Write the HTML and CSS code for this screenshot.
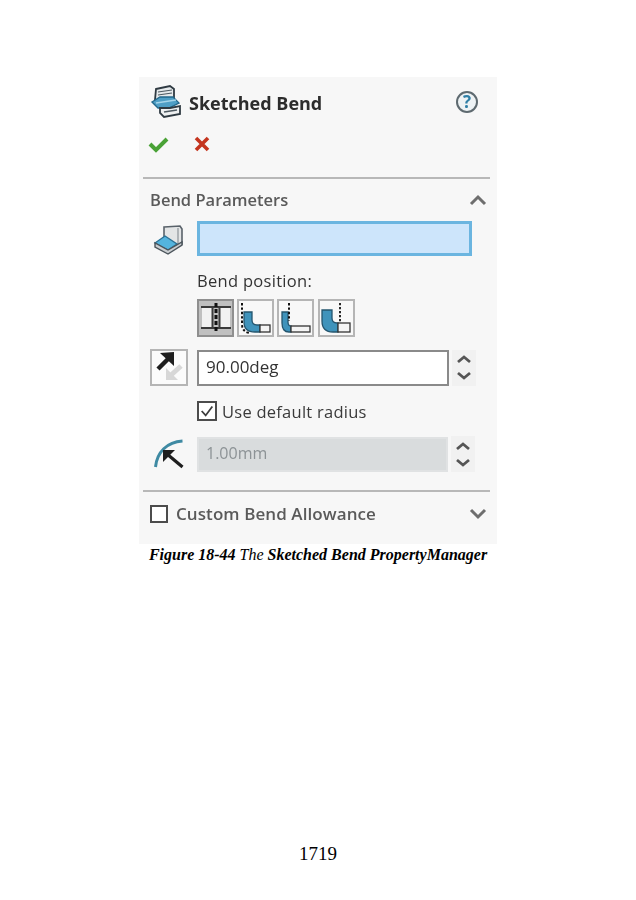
FILE: index.html
```html
<!DOCTYPE html>
<html lang="en">
<head>
  <meta charset="UTF-8" />
  <title>Sketched Bend</title>
  <link rel="stylesheet" href="styles.css">
</head>
<body>
  <div class="page">
    <div class="panel">
      <div class="title-row">
        <svg class="title-icon" width="32" height="34" viewBox="0 0 32 34">
          <path d="M5 4 L19 1 L23 4 L23 16 L7 18 L4 15 Z" fill="#e6eaec" stroke="#2f3a42" stroke-width="1.8"/>
          <path d="M7 7 L21 5 M7 10 L21 8" stroke="#4e5a62" stroke-width="1.1" fill="none"/>
          <path d="M1 17 L9 12 L22 12 L28 18 L18 23 L7 23 Z" fill="#4f9fc6" stroke="#22688c" stroke-width="1.3"/>
          <path d="M5 18 L25 15" stroke="#a6d5ea" stroke-width="1.5"/>
          <path d="M9 23 L9 28 L13 32 L29 29 L29 21 L19 23 Z" fill="#eef0f1" stroke="#2f3a42" stroke-width="1.8"/>
          <path d="M13 27 L26 25" stroke="#4e5a62" stroke-width="1.5"/>
        </svg>
        <span class="title">Sketched Bend</span>
        <svg class="help-icon" width="24" height="24" viewBox="0 0 24 24">
          <circle cx="12" cy="12" r="10" fill="#eef3f5" stroke="#5e6a70" stroke-width="2"/>
          <text x="12" y="18" text-anchor="middle" class="help-mark">?</text>
        </svg>
      </div>
      <div class="actions">
        <svg width="22" height="18" viewBox="0 0 22 18">
          <path d="M2 9 L8 15 L19 4" fill="none" stroke="#4aa236" stroke-width="4"/>
        </svg>
        <svg width="18" height="18" viewBox="0 0 18 18">
          <path d="M3 3 L15 15 M15 3 L3 15" fill="none" stroke="#c4351f" stroke-width="3.6"/>
        </svg>
      </div>
      <hr class="divider">
      <div class="section-head">
        <span class="section-title">Bend Parameters</span>
        <svg class="chevron" width="18" height="12" viewBox="0 0 18 12">
          <path d="M2 10 L9 3 L16 10" fill="none" stroke="#6e6e6e" stroke-width="3"/>
        </svg>
      </div>
      <div class="fields">
        <div class="row-icon">
          <svg width="32" height="32" viewBox="0 0 32 32">
            <path d="M11 4 L27 3 L29 6 L29 21 L24 22 L11 16 Z" fill="#e3e5e6" stroke="#59626a" stroke-width="1.6"/>
            <path d="M25 5 L25 21" stroke="#8b9298" stroke-width="1.2"/>
            <path d="M2 20 L12 13 L24 21 L15 27 Z" fill="#54b4de" stroke="#2c7296" stroke-width="1.4"/>
            <path d="M2 20 L2 24 L15 31 L29 22 L29 19 L15 27 Z" fill="#c9cdd0" stroke="#4b545b" stroke-width="1.4"/>
          </svg>
        </div>
        <div class="selection-box"></div>

        <div class="spacer"></div>
        <div class="position-group">
          <div class="field-label">Bend position:</div>
          <div class="position-buttons">
            <button class="pos-btn active">
              <svg width="32" height="32" viewBox="0 0 32 32">
                <path d="M2 6 H12 V25 H2 Z M20 6 H30 V25 H20 Z" fill="#f2f2f2"/>
                <path d="M1 5 L31 5 M1 26 L31 26" stroke="#3b3b3b" stroke-width="1.8"/>
                <path d="M12.5 5 L12.5 26 M19.5 5 L19.5 26" stroke="#3b3b3b" stroke-width="2"/>
                <path d="M16 1 L16 31" stroke="#111" stroke-width="3" stroke-dasharray="4 2"/>
              </svg>
            </button>
            <button class="pos-btn">
              <svg width="32" height="32" viewBox="0 0 32 32">
                <path d="M4 10 H12 V18 Q12 23 17 23 H20 V30 H15 Q4 30 4 20 Z" fill="#3f93bb" stroke="#24556e" stroke-width="1.3"/>
                <rect x="20" y="23" width="10" height="7" fill="#f4f4f4" stroke="#333" stroke-width="1.3"/>
                <path d="M2 1 L2 22 Q2 30 10 31" fill="none" stroke="#111" stroke-width="2" stroke-dasharray="2.4 2"/>
              </svg>
            </button>
            <button class="pos-btn">
              <svg width="32" height="32" viewBox="0 0 32 32">
                <path d="M2 10 H8 V20 Q8 24 11 24 V30 H9 Q2 30 2 21 Z" fill="#3f93bb" stroke="#24556e" stroke-width="1.3"/>
                <rect x="11" y="24" width="19" height="6" fill="#f4f4f4" stroke="#333" stroke-width="1.3"/>
                <path d="M9 1 L9 19" stroke="#111" stroke-width="2" stroke-dasharray="2.4 2"/>
              </svg>
            </button>
            <button class="pos-btn">
              <svg width="32" height="32" viewBox="0 0 32 32">
                <path d="M2 8 H12 V16 Q12 21 17 21 H18 V30 H13 Q2 30 2 19 Z" fill="#3f93bb" stroke="#24556e" stroke-width="1.3"/>
                <rect x="18" y="21" width="12" height="9" fill="#f4f4f4" stroke="#333" stroke-width="1.3"/>
                <path d="M20 1 L20 21" stroke="#111" stroke-width="1.8" stroke-dasharray="2.2 1.8"/>
              </svg>
            </button>
          </div>
        </div>

        <div class="row-icon">
          <div class="direction-btn">
            <svg width="34" height="33" viewBox="0 0 34 33">
              <path d="M29 15 L18 25" stroke="#d7d7d7" stroke-width="5"/>
              <path d="M14 29 L14 17 L26 29 Z" fill="#d7d7d7"/>
              <path d="M6 18 L17 7" stroke="#1e1e1e" stroke-width="4.4"/>
              <path d="M22 1 L8 2 L22 15 Z" fill="#1e1e1e"/>
            </svg>
          </div>
        </div>
        <div class="value-row">
          <div class="value-box">90.00deg</div>
          <div class="spinner">
            <svg width="16" height="11" viewBox="0 0 16 11"><path d="M2 8 L8 3 L14 8" fill="none" stroke="#555" stroke-width="2.8"/></svg>
            <svg width="16" height="11" viewBox="0 0 16 11"><path d="M2 3 L8 8 L14 3" fill="none" stroke="#555" stroke-width="2.8"/></svg>
          </div>
        </div>

        <div class="spacer"></div>
        <label class="check-row">
          <span class="checkbox">
            <svg width="18" height="18" viewBox="0 0 18 18"><path d="M3 9 L7.5 14 L15 4" fill="none" stroke="#3c3c3c" stroke-width="2"/></svg>
          </span>
          <span class="check-label">Use default radius</span>
        </label>

        <div class="row-icon">
          <svg width="34" height="34" viewBox="0 0 34 34">
            <path d="M3.5 30 C5 15 15 5 30.5 4" fill="none" stroke="#3f8aa3" stroke-width="3"/>
            <path d="M15 17 L30.5 30" stroke="#1e1e1e" stroke-width="3.2"/>
            <path d="M11 13 L23 13 L11 25 Z" fill="#1e1e1e"/>
          </svg>
        </div>
        <div class="value-row">
          <div class="value-box disabled">1.00mm</div>
          <div class="spinner">
            <svg width="16" height="11" viewBox="0 0 16 11"><path d="M2 8 L8 3 L14 8" fill="none" stroke="#555" stroke-width="2.8"/></svg>
            <svg width="16" height="11" viewBox="0 0 16 11"><path d="M2 3 L8 8 L14 3" fill="none" stroke="#555" stroke-width="2.8"/></svg>
          </div>
        </div>
      </div>
      <hr class="divider lower">
      <div class="section-head custom">
        <span class="checkbox plain"></span>
        <span class="section-title wide">Custom Bend Allowance</span>
        <svg class="chevron" width="18" height="12" viewBox="0 0 18 12">
          <path d="M2 2 L9 9 L16 2" fill="none" stroke="#6e6e6e" stroke-width="3"/>
        </svg>
      </div>
    </div>
    <p class="caption"><b>Figure 18-44</b> The <b>Sketched Bend PropertyManager</b></p>
    <div class="page-number">1719</div>
  </div>
</body>
</html>
```

FILE: styles.css
```css
body {
  margin: 0;
  background: #fff;
  font-family: "Open Sans", sans-serif;
}

.page {
  width: 636px;
  height: 900px;
  padding-top: 77px;
  box-sizing: border-box;
  display: flex;
  flex-direction: column;
  align-items: center;
}

.panel {
  width: 358px;
  height: 467px;
  box-sizing: border-box;
  padding: 8px 7px 0 4px;
  background: #f7f7f7;
  filter: blur(0.35px);
}

.title-row {
  display: flex;
  align-items: center;
  height: 34px;
  padding-left: 8px;
}

.title-icon {
  margin-right: 6px;
}

.title {
  font-size: 18px;
  font-weight: 700;
  color: #2c2c2c;
  flex: 1;
  padding-top: 1px;
}

.help-icon {
  margin-right: 11px;
}

.help-mark {
  font-family: "Open Sans", sans-serif;
  font-size: 17px;
  font-weight: 700;
  fill: #2f7fa6;
}

.actions {
  display: flex;
  align-items: center;
  gap: 23px;
  height: 24px;
  margin-top: 13px;
  padding-left: 5px;
}

.divider {
  height: 2px;
  border: 0;
  margin: 21px 0 0 0;
  background: #b8b8b8;
}

.divider.lower {
  margin-top: 18px;
}

.section-head {
  display: flex;
  align-items: center;
  height: 20px;
  margin-top: 11px;
  padding-left: 7px;
}

.section-title {
  flex: 1;
  font-size: 16.5px;
  font-weight: 600;
  color: #5a5a5a;
  line-height: 18px;
}

.section-title.wide {
  font-size: 17px;
  letter-spacing: 0.08px;
}

.chevron {
  margin-right: 3px;
}

.fields {
  display: grid;
  grid-template-columns: 54px 1fr;
  row-gap: 12px;
  margin-top: 11px;
}

.row-icon {
  display: flex;
  justify-content: center;
  align-items: center;
  padding-right: 3px;
}

.spacer {
  min-height: 0;
}

.selection-box {
  width: 275px;
  height: 35px;
  box-sizing: border-box;
  border: 3px solid #6bb5e0;
  background: #cde5fb;
}

.position-group {
  margin-top: 3px;
}

.field-label {
  font-size: 16.5px;
  font-weight: 500;
  letter-spacing: 0.3px;
  color: #333;
  line-height: 20px;
}

.position-buttons {
  display: flex;
  gap: 3.2px;
  margin-top: 8px;
}

.pos-btn {
  width: 37px;
  height: 38px;
  padding: 0;
  border: 2px solid #b5b5b5;
  background: #f8f8f8;
  display: flex;
  align-items: center;
  justify-content: center;
}

.pos-btn.active {
  background: #c0c0c0;
  border-color: #8f8f8f;
}

.direction-btn {
  width: 38px;
  height: 37px;
  box-sizing: border-box;
  border: 2px solid #b5b5b5;
  background: #fbfbfb;
  display: flex;
  align-items: center;
  justify-content: center;
}

.value-row {
  display: flex;
  align-items: center;
  gap: 3px;
}

.value-box {
  width: 252px;
  height: 36px;
  box-sizing: border-box;
  border: 2px solid #8a8a8a;
  background: #fff;
  font-size: 17px;
  line-height: 29px;
  padding-left: 7px;
  color: #333;
}

.value-box.disabled {
  width: 251px;
  height: 35px;
  border-color: #e0e2e3;
  background: #d9dcdd;
  color: #8d9396;
  font-size: 16px;
}

.spinner {
  width: 24px;
  height: 36px;
  background: #f1f1f1;
  display: flex;
  flex-direction: column;
  align-items: center;
  justify-content: center;
  gap: 5px;
}

.check-row {
  display: flex;
  align-items: center;
  gap: 5px;
  height: 20px;
  margin: 3px 0 3px;
}

.checkbox {
  width: 20px;
  height: 20px;
  box-sizing: border-box;
  border: 2px solid #4c4c4c;
  background: #fff;
  display: flex;
  align-items: center;
  justify-content: center;
}

.checkbox.plain {
  width: 18px;
  height: 18px;
  margin-right: 8px;
}

.check-label {
  font-size: 16.5px;
  font-weight: 500;
  letter-spacing: 0.25px;
  color: #3a3a3a;
}

.section-head.custom {
  margin-top: 12px;
}

.caption {
  margin: 2px 0 0;
  font-family: "Liberation Serif", serif;
  font-style: italic;
  font-size: 16px;
  line-height: 18px;
  color: #000;
}

.page-number {
  margin-top: 279px;
  font-family: "Liberation Serif", serif;
  font-size: 19px;
  line-height: 22px;
  color: #000;
}
```
